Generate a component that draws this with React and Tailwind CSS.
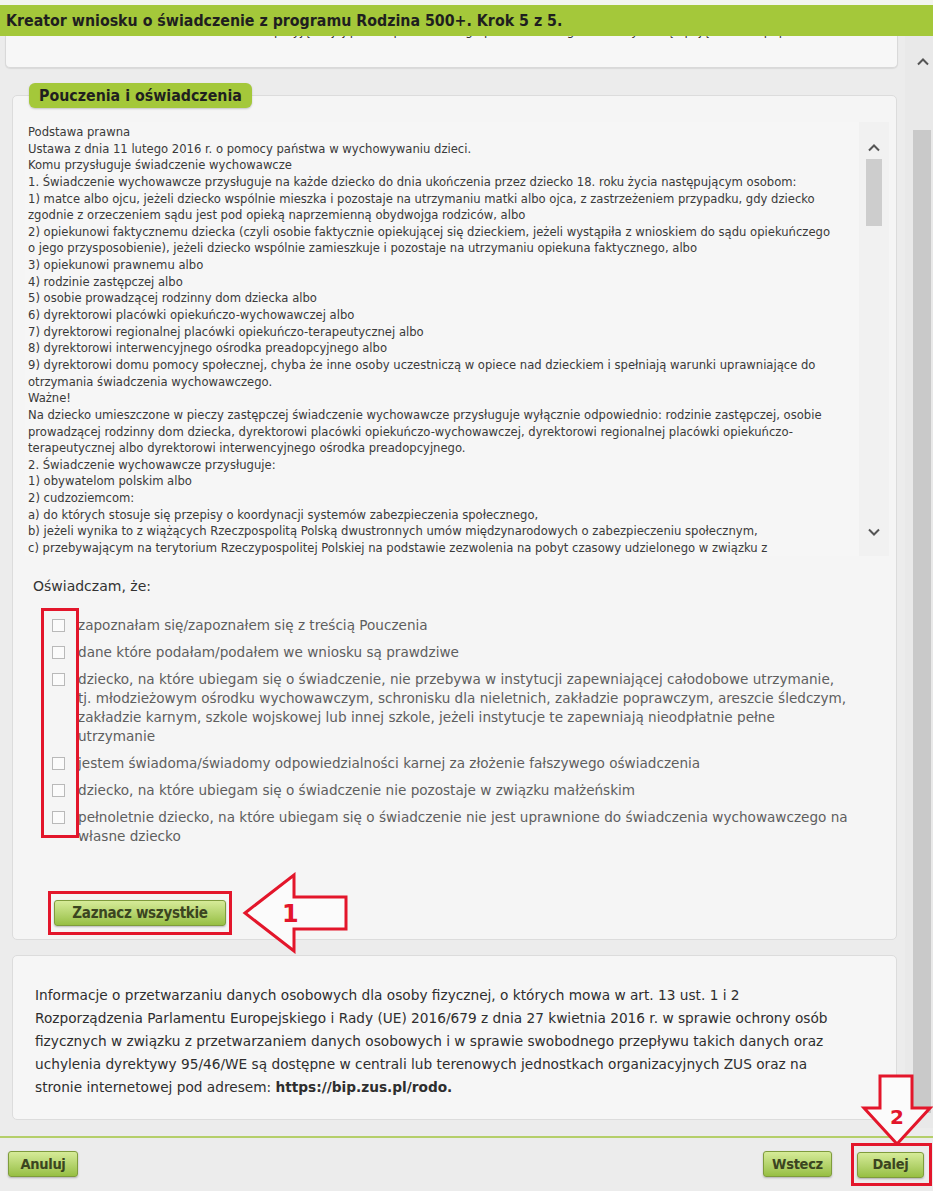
import React from "react";

const LEGAL = [
  "Podstawa prawna",
  "Ustawa z dnia 11 lutego 2016 r. o pomocy państwa w wychowywaniu dzieci.",
  "Komu przysługuje świadczenie wychowawcze",
  "1. Świadczenie wychowawcze przysługuje na każde dziecko do dnia ukończenia przez dziecko 18. roku życia następującym osobom:",
  "1) matce albo ojcu, jeżeli dziecko wspólnie mieszka i pozostaje na utrzymaniu matki albo ojca, z zastrzeżeniem przypadku, gdy dziecko",
  "zgodnie z orzeczeniem sądu jest pod opieką naprzemienną obydwojga rodziców, albo",
  "2) opiekunowi faktycznemu dziecka (czyli osobie faktycznie opiekującej się dzieckiem, jeżeli wystąpiła z wnioskiem do sądu opiekuńczego",
  "o jego przysposobienie), jeżeli dziecko wspólnie zamieszkuje i pozostaje na utrzymaniu opiekuna faktycznego, albo",
  "3) opiekunowi prawnemu albo",
  "4) rodzinie zastępczej albo",
  "5) osobie prowadzącej rodzinny dom dziecka albo",
  "6) dyrektorowi placówki opiekuńczo-wychowawczej albo",
  "7) dyrektorowi regionalnej placówki opiekuńczo-terapeutycznej albo",
  "8) dyrektorowi interwencyjnego ośrodka preadopcyjnego albo",
  "9) dyrektorowi domu pomocy społecznej, chyba że inne osoby uczestniczą w opiece nad dzieckiem i spełniają warunki uprawniające do",
  "otrzymania świadczenia wychowawczego.",
  "Ważne!",
  "Na dziecko umieszczone w pieczy zastępczej świadczenie wychowawcze przysługuje wyłącznie odpowiednio: rodzinie zastępczej, osobie",
  "prowadzącej rodzinny dom dziecka, dyrektorowi placówki opiekuńczo-wychowawczej, dyrektorowi regionalnej placówki opiekuńczo-",
  "terapeutycznej albo dyrektorowi interwencyjnego ośrodka preadopcyjnego.",
  "2. Świadczenie wychowawcze przysługuje:",
  "1) obywatelom polskim albo",
  "2) cudzoziemcom:",
  "a) do których stosuje się przepisy o koordynacji systemów zabezpieczenia społecznego,",
  "b) jeżeli wynika to z wiążących Rzeczpospolitą Polską dwustronnych umów międzynarodowych o zabezpieczeniu społecznym,",
  "c) przebywającym na terytorium Rzeczypospolitej Polskiej na podstawie zezwolenia na pobyt czasowy udzielonego w związku z",
  "okolicznościami, o których mowa w art. 127 ustawy z dnia 12 grudnia 2013 r. o cudzoziemcach, jeżeli zamieszkują",
];

const STATEMENTS = [
  ["zapoznałam się/zapoznałem się z treścią Pouczenia"],
  ["dane które podałam/podałem we wniosku są prawdziwe"],
  [
    "dziecko, na które ubiegam się o świadczenie, nie przebywa w instytucji zapewniającej całodobowe utrzymanie,",
    "tj. młodzieżowym ośrodku wychowawczym, schronisku dla nieletnich, zakładzie poprawczym, areszcie śledczym,",
    "zakładzie karnym, szkole wojskowej lub innej szkole, jeżeli instytucje te zapewniają nieodpłatnie pełne",
    "utrzymanie",
  ],
  ["jestem świadoma/świadomy odpowiedzialności karnej za złożenie fałszywego oświadczenia"],
  ["dziecko, na które ubiegam się o świadczenie nie pozostaje w związku małżeńskim"],
  [
    "pełnoletnie dziecko, na które ubiegam się o świadczenie nie jest uprawnione do świadczenia wychowawczego na",
    "własne dziecko",
  ],
];

const INFO = [
  "Informacje o przetwarzaniu danych osobowych dla osoby fizycznej, o których mowa w art. 13 ust. 1 i 2",
  "Rozporządzenia Parlamentu Europejskiego i Rady (UE) 2016/679 z dnia 27 kwietnia 2016 r. w sprawie ochrony osób",
  "fizycznych w związku z przetwarzaniem danych osobowych i w sprawie swobodnego przepływu takich danych oraz",
  "uchylenia dyrektywy 95/46/WE są dostępne w centrali lub terenowych jednostkach organizacyjnych ZUS oraz na",
];

function Chevron({ down }) {
  return (
    <svg width="12" height="8" viewBox="0 0 12 8">
      <polyline
        points={down ? "1,1.5 6,6.5 11,1.5" : "1,6.5 6,1.5 11,6.5"}
        fill="none"
        stroke="#555"
        strokeWidth="2"
      />
    </svg>
  );
}

function GreenButton({ children, className = "" }) {
  return (
    <button
      className={`h-[26px] rounded-[3px] border border-[#7f9c3c] bg-gradient-to-b from-[#d6eb98] to-[#97bf42] font-['DejaVu_Sans_Condensed','DejaVu_Sans',sans-serif] font-bold text-[#3b4520] tracking-[-0.3px] shadow-[0_1px_2px_rgba(0,0,0,0.25)] ${className}`}
    >
      {children}
    </button>
  );
}

export default function App() {
  return (
    <div className="w-[933px] h-[1191px] overflow-hidden bg-[#ececec] flex flex-col">
      <div className="h-[5px] bg-[#f3f5ee]" />
      <div className="h-[31px] bg-[#a4c83a] flex items-center px-[6px] font-['DejaVu_Sans_Condensed','DejaVu_Sans',sans-serif] text-[15.8px] font-bold text-[#1f1f1f]">
        Kreator wniosku o świadczenie z programu Rodzina 500+. Krok 5 z 5.
      </div>

      <div className="h-[1092px] flex">
        <div className="w-[905px] flex flex-col">
          {/* tail of the previous step's section */}
          <div className="ml-[5px] w-[893px] h-[32px] overflow-hidden bg-[#f7f7f7] border border-t-0 border-[#d9d9d9] rounded-b-[5px] shadow-[0_1px_1px_rgba(0,0,0,0.08)]">
            <div className="-mt-[13px] pl-[268px] font-['DejaVu_Sans',sans-serif] text-[12px] leading-[16px] text-[#333] whitespace-nowrap">
              przyjęcia jej przez upoważnionego pracownika, zgodnie z wybraną opcją w kroku poprzednim.
            </div>
          </div>

          {/* Pouczenia i oświadczenia */}
          <div className="relative mt-[27px] ml-[12px] w-[885px] h-[845px] bg-[#f5f5f5] border border-[#dcdcdc] rounded-[5px] pt-[26px] pl-[12px] pr-[7px]">
            <div className="absolute -top-[13px] left-[16px] h-[25px] px-[10px] flex items-center rounded-[6px] bg-[#a4c83a] shadow-[0_1px_2px_rgba(0,0,0,0.2)] font-['DejaVu_Sans_Condensed','DejaVu_Sans',sans-serif] text-[15.8px] font-bold text-[#1f1f1f]">
              Pouczenia i oświadczenia
            </div>

            <div className="h-[434px] flex bg-[#f6f6f6]">
              <div className="flex-1 overflow-hidden pt-[2px] pl-[3px] font-['DejaVu_Sans_Condensed','DejaVu_Sans',sans-serif] text-[12.9px] leading-[16.64px] text-[#3a3a3a]">
                {LEGAL.map((line, i) => (
                  <div key={i} className="whitespace-nowrap">
                    {line}
                  </div>
                ))}
              </div>
              <div className="w-[30px] flex flex-col items-center bg-[#f1f1f1]">
                <div className="mt-[21px] h-[10px] flex items-center">
                  <Chevron />
                </div>
                <div className="mt-[6px] w-[16px] h-[67px] bg-[#cdcdcd]" />
                <div className="flex-1" />
                <div className="mb-[19px] h-[10px] flex items-center">
                  <Chevron down />
                </div>
              </div>
            </div>

            <div className="mt-[21px] pl-[8px] font-['DejaVu_Sans',sans-serif] text-[14px] leading-[19px] text-[#333]">
              Oświadczam, że:
            </div>

            <div className="relative mt-[20px] ml-[27px] flex flex-col gap-[8px] font-['DejaVu_Sans',sans-serif] text-[13.6px] leading-[19px] text-[#5e5e5e]">
              {STATEMENTS.map((lines, i) => (
                <label key={i} className="flex items-start gap-[13px]">
                  <span className="mt-[3px] w-[13px] h-[13px] shrink-0 border border-[#b9b9b9] bg-[#fbfbfb]" />
                  <span>
                    {lines.map((l, j) => (
                      <div key={j} className="whitespace-nowrap">
                        {l}
                      </div>
                    ))}
                  </span>
                </label>
              ))}
              <div className="absolute -left-[11px] -top-[8px] w-[38px] h-[230px] border-[3px] border-[#e3162b]" />
            </div>

            <div className="mt-[26px] ml-[23px] flex items-center">
              <div className="border-[3px] border-[#e3162b] px-[3px] py-[6px]">
                <GreenButton className="w-[172px] text-[15px]">Zaznacz wszystkie</GreenButton>
              </div>
              <svg width="110" height="82" viewBox="0 0 110 82" className="ml-[10px]">
                <polygon
                  points="3,41 52,3 52,25 104,25 104,57 52,57 52,79"
                  fill="#fbfbfb"
                  stroke="#e3162b"
                  strokeWidth="3"
                  strokeLinejoin="miter"
                />
                <text
                  x="40"
                  y="50"
                  fontFamily="DejaVu Sans, sans-serif"
                  fontWeight="bold"
                  fontSize="24"
                  fill="#e3162b"
                >
                  1
                </text>
              </svg>
            </div>
          </div>

          {/* RODO information */}
          <div className="mt-[15px] ml-[12px] w-[885px] h-[165px] bg-[#f6f6f6] border border-[#dcdcdc] rounded-[5px] pt-[28px] pl-[22px] font-['DejaVu_Sans',sans-serif] text-[13.7px] leading-[23px] text-[#2e2e2e]">
            {INFO.map((line, i) => (
              <div key={i} className="whitespace-nowrap">
                {line}
              </div>
            ))}
            <div className="whitespace-nowrap">
              stronie internetowej pod adresem: <b>https://bip.zus.pl/rodo.</b>
            </div>
          </div>
        </div>

        {/* page scrollbar */}
        <div className="w-[28px] flex flex-col bg-[#e9e9e9]">
          <div className="mt-[21px] h-[10px] pl-[12px] flex items-center">
            <Chevron />
          </div>
          <div className="mt-[63px] ml-[8px] w-[18px] h-[983px] bg-[#c9c9c9]" />
        </div>
      </div>

      <div className="mt-[8px] h-[2px] bg-[#b5cf6a]" />

      <div className="mt-[5px] pl-[8px] pr-[1px] flex items-center">
        <GreenButton className="w-[70px] h-[25px] text-[14.5px]">Anuluj</GreenButton>
        <div className="flex-1" />
        <GreenButton className="w-[69px] h-[25px] text-[14.5px]">Wstecz</GreenButton>
        <div className="relative ml-[19px] border-[3px] border-[#e3162b] pt-[5px] pb-[5px] pl-[3px] pr-[5px]">
          <GreenButton className="w-[67px] h-[25px] text-[14.5px]">Dalej</GreenButton>
          <svg
            width="74"
            height="72"
            viewBox="0 0 74 72"
            className="absolute left-[6px] -top-[72px]"
          >
            <polygon
              points="20,2 52,2 52,34 70,34 37,70 4,34 20,34"
              fill="#fbfbfb"
              stroke="#e3162b"
              strokeWidth="3"
            />
            <text
              x="30"
              y="50"
              fontFamily="DejaVu Sans, sans-serif"
              fontWeight="bold"
              fontSize="20"
              fill="#e3162b"
            >
              2
            </text>
          </svg>
        </div>
      </div>
    </div>
  );
}
